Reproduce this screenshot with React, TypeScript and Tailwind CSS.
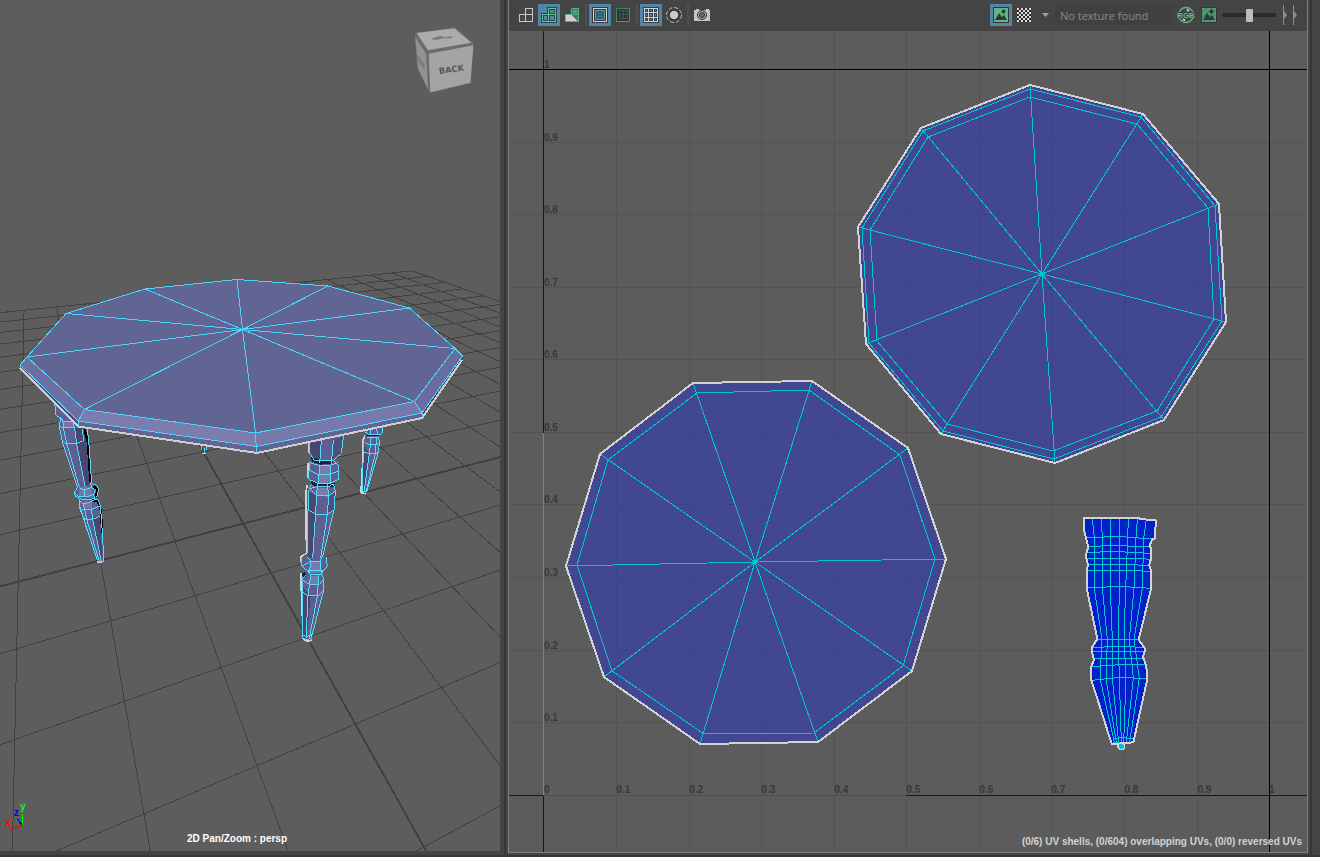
import type { ReactNode } from "react";

type Pt = [number, number];

/* ---------- perspective viewport ---------- */

const weight = (u: number, v: number) => 1 + 0.0436 * u - 0.114 * v;

const project = (u: number, v: number): Pt => {
  const w = weight(u, v);
  return [(75.83 * u - 3.17 * v + 243.3) / w, (5.95 * u - 15.7 * v + 523.5) / w];
};

const steps = Array.from({ length: 25 }, (_, i) => i - 12);

function GroundGrid() {
  const lines: { a: Pt; b: Pt; main: boolean }[] = [];
  steps.forEach((n) => {
    const uStart = Math.max(-12, (0.15 - 1 + 0.114 * n) / 0.0436);
    if (uStart < 12) lines.push({ a: project(uStart, n), b: project(12, n), main: n === 0 });
    const vEnd = Math.min(12, (1 + 0.0436 * n - 0.15) / 0.114);
    lines.push({ a: project(n, -12), b: project(n, vEnd), main: n === 0 });
  });
  return (
    <g stroke="#414141" fill="none">
      {lines.map((l, i) => (
        <line key={i} x1={l.a[0]} y1={l.a[1]} x2={l.b[0]} y2={l.b[1]} strokeWidth={l.main ? 2 : 1} />
      ))}
    </g>
  );
}

const tableInner: Pt[] = [
  [27, 357], [66, 313.5], [145, 289], [237, 279.5], [328, 286],
  [409.5, 308], [455, 348.5], [414.5, 401.5], [255.5, 433], [84.5, 409.5],
];

function FrontLeg() {
  return (
    <g transform="translate(280 420) scale(0.33333)" strokeWidth="3">
      <path fill="#5c5f90" stroke="none" d="M88 60L88 98L100 118L88 130L86 180L97 190L84 203L80 270L83 410L64 412L65 440L80 462L66 470L66 540L70 655L82 663L95 655L130 520L132 472L125 460L142 438L138 410L126 402L163 270L166 210L160 198L175 178L175 138L160 124L184 100L191 40Z" />
      <path fill="#464872" stroke="none" d="M88 60L124 60L119 120L92 102ZM86 215L112 228L108 280L82 268ZM82 268L108 282L98 415L84 410ZM66 500L92 528L80 655L70 655Z" />
      <path fill="#1e2038" stroke="none" d="M92 108L120 120L160 120L160 130L120 134L96 126ZM92 178L112 190L165 190L160 202L112 200L95 194ZM66 460L76 456L78 470L68 472Z" />
      <path fill="#787bac" stroke="none" d="M118 136L151 136L150 190L116 188ZM92 424L120 424L122 458L88 458ZM92 468L116 468L116 492L90 492ZM112 204L142 204L145 230L110 228Z" />
      <path fill="#4d4f7c" stroke="none" d="M157 60L190 50L184 100L157 118ZM145 230L166 214L163 270L142 283Z" />
      <g fill="none" stroke="#d2d2d4" strokeWidth="5">
        <path d="M87 68V98M84 128L84 175M82 195L78 215L78 315M78 315L80 400L62 410V425M64 460L63 512M66 512L68 655L82 664L96 660" />
      </g>
      <g fill="none" stroke="#53dcfc">
        <path d="M88 68V98L102 120L160 122L184 100L191 45" />
        <path d="M88 126L86 178M118 136L88 128M118 136H151L175 128M88 150L115 164H150L175 152M86 178L114 190H150L176 178L175 135L162 124M118 136L116 190M151 136L150 190" />
        <path d="M95 192L88 206L110 228H146L166 214L160 192M88 206L112 200H145L160 192M112 192L110 228L98 415M142 192L146 228L142 283L122 415M85 210L82 400M166 214L162 270L128 410M82 268L108 283H142L162 270" />
        <path d="M124 60L119 130M160 60L154 134" />
        <path d="M66 412V438L82 452H130L142 438L138 410M83 412L92 424H120L128 408M66 438L92 424L88 460M120 424L124 458M82 452L92 464H122L130 452" />
        <path d="M78 465L66 478L88 493H118L132 476L124 460M66 514L84 528H112L130 514M66 478L68 654L82 660L94 654L130 514L132 476M92 464L84 528L78 655M116 466L112 528L88 655M68 644L80 650L96 644" />
      </g>
    </g>
  );
}

function BackRightLeg() {
  return (
    <g transform="translate(280 420) scale(0.33333)" strokeWidth="3">
      <path fill="#5c5f90" stroke="none" d="M252 30L308 20L306 42L296 50L298 72L294 100L260 222H243L252 60L262 48L252 40Z" />
      <path fill="#464872" stroke="none" d="M250 70L266 100L252 215H246Z" />
      <path fill="none" stroke="#d2d2d4" strokeWidth="5" d="M255 46L249 60V110L243 218L258 222" />
      <path fill="none" stroke="#53dcfc" d="M252 34L268 44H300L308 36V22M272 28L270 44M290 24L292 44M262 52H296L298 70L288 75H268L254 66M252 60L252 96L268 101H290L296 96M298 70L294 100L260 216H246L250 100M274 50L268 101L252 216M290 50L286 101L258 216" />
      <path fill="none" stroke="#111428" d="M262 47H296" />
    </g>
  );
}

function LeftLeg() {
  return (
    <g transform="translate(40 400) scale(0.33333)" strokeWidth="3">
      <path fill="#5c5f90" stroke="none" d="M44 10L58 80L68 130L112 262L103 280L120 302L120 320L172 488H190L188 420L180 320L170 296L176 270L155 250L148 140L138 88L60 30Z" />
      <path fill="#464872" stroke="none" d="M104 84H134L150 250L136 262L118 180ZM158 352L178 348L188 470L180 470Z" />
      <path fill="#7477a8" stroke="none" d="M68 64H98L100 84H68ZM118 262L154 262L158 292H116ZM132 304L156 306L156 326L130 324Z" />
      <path fill="none" stroke="#000" strokeWidth="7" d="M134 88L144 130L151 245M156 300L174 304L182 330L187 400M160 258L172 268L168 290" />
      <g fill="none" stroke="#53dcfc">
        <path d="M44 10L48 45L62 55L58 80L68 130L112 262L103 278L106 288L120 300L118 320L130 355L172 480M48 45L70 60M58 80L72 84H106M60 50L68 64H96M98 64L104 84L110 132L136 262M70 84L80 130L118 262M78 132H108L130 122L128 88M68 64L72 84M68 124L80 132M142 88L146 120L155 250" />
        <path d="M120 264L134 270L154 262L152 250M104 278L116 290H142L160 284L166 270L154 262M134 270L132 290M155 250L170 256L176 270L170 290M116 290L128 300H150L164 294L160 284" />
        <path d="M120 304L130 312L150 306L172 296L180 314L184 352L192 484H172M130 312L134 328L126 330M134 328H154L180 318M128 350L138 358H158L180 348M134 328L140 358L178 484M154 328L158 358L184 484M120 320L130 350L140 390" />
      </g>
      <path fill="none" stroke="#d2d2d4" strokeWidth="4" d="M172 488H186" />
    </g>
  );
}

function TableMesh() {
  return (
    <g>
      <path d="M201.500 446V450M204.500 448V453M206.500 447V450" fill="none" stroke="#4fd8fb" strokeWidth="1" />
      <path d="M202 453.500H206" fill="none" stroke="#d2d2d4" />
      <BackRightLeg />
      <LeftLeg />
      <FrontLeg />
      <path d="M20 365L27 357L66 313L145 289L237 279.5L328 286L409.5 308L455 348.5L462.5 356L462 361L422 418L257 453L78 427L20 368Z" fill="#616594" />
      <path d="M84.5 409.5L255.5 433L256.5 446.5L78 421Z" fill="#7a7dae" />
      <path d="M255.5 433L414.5 401.5L422 413L256.5 446.5Z" fill="#7679aa" />
      <path d="M20 365L27 357L84.5 409.5L78 421Z" fill="#6c6fa1" />
      <path d="M414.5 401.5L455 348.5L462.5 356L422 413Z" fill="#696c9e" />
      <path d="M20 366L78 422V427L20 369ZM422 413L462 357V361L422 418Z" fill="#41436c" />
      <path d="M20 368L78.500 426.500L257 453L422 418L462 360" fill="none" stroke="#cfcfd3" strokeWidth="2" />
      <g stroke="#4bd5fc" strokeWidth="1" fill="none">
        <polygon points={tableInner.map((p) => p.join(",")).join(" ")} />
        {tableInner.map((p, i) => (
          <line key={i} x1="242.5" y1="329.5" x2={p[0]} y2={p[1]} />
        ))}
        <path d="M27 357L20 365L78 421L256.500 446.500L422 413L462.500 356L455 348.500M84.500 409.500L78 421V426M255.500 433L256.500 452M414.500 401.500L422 413V417M20 365V368" />
      </g>
    </g>
  );
}

function ViewCube() {
  return (
    <g transform="translate(400 15) scale(0.33333)">
      <path d="M43 54L165 37L222 85L213 205L90 235L52 163Z" fill="#6c6c6c" />
      <path d="M50 54L163 40L214 83L84 106Z" fill="#ababab" />
      <path d="M46 66L78 116L84 222L54 160Z" fill="#929292" />
      <path d="M86 116L220 91L211 203L91 232Z" fill="#a4a4a4" />
      <path d="M92 71L120 62L132 66L158 64L154 70L128 70L108 76Z" fill="#7c7c7c" />
      <path d="M50 116L74 150V166L52 132Z" fill="#7b7b7b" />
      <text x="154" y="172" fontSize="25" fontWeight="700" textAnchor="middle" fill="#55575f" fontFamily="DejaVu Sans, sans-serif" transform="rotate(-8 154 163)">
        BACK
      </text>
    </g>
  );
}

function PerspectiveView() {
  return (
    <section aria-label="Perspective view" className="relative mb-1 min-w-0 flex-[500] overflow-hidden bg-[#5d5d5d]">
      <svg className="absolute inset-0 h-full w-full" viewBox="0 0 500 851" preserveAspectRatio="xMidYMid slice">
        <g shapeRendering="crispEdges">
          <GroundGrid />
          <TableMesh />
        </g>
        <ViewCube />
        <g fill="none" shapeRendering="crispEdges">
          <path d="M10 828.500L16 827.500L22 825.500" stroke="#f00" />
          <path d="M17.500 819L22 825" stroke="#00c" />
          <path d="M22.500 814V825" stroke="#0f0" />
        </g>
        <g fontFamily="Liberation Sans, sans-serif" fontWeight="700" fontSize="10">
          <text x="5" y="826" fill="#f00">x</text>
          <text x="14" y="816" fill="#00c">z</text>
          <text x="20" y="810" fill="#2e2">y</text>
        </g>
      </svg>
      <p className="absolute bottom-[5px] left-[187px] font-['Liberation_Sans',sans-serif] text-[10px] leading-[14px] font-bold whitespace-nowrap text-white">
        2D Pan/Zoom : persp
      </p>
    </section>
  );
}

/* ---------- UV editor ---------- */

const gridX = [616.5, 689.5, 761.5, 834.5, 906.5, 979.5, 1051.5, 1124.5, 1197.5];
const gridY = [722.5, 650.5, 577.5, 504.5, 432.5, 359.5, 287.5, 214.5, 142.5];

type Shell = { center: Pt; outer: Pt[]; rings: Pt[][] };

const discTop: Shell = {
  center: [1042, 274],
  outer: [[1030, 85], [1143, 114], [1219, 204], [1226, 322], [1164, 420], [1055, 463], [941, 434], [866, 344], [858, 227], [921, 128]],
  rings: [
    [[1030, 89], [1141, 117], [1215, 206], [1222, 321], [1161, 417], [1054, 459], [943, 431], [869, 343], [862, 228], [923, 131]],
    [[1030, 97], [1137, 124], [1208, 208], [1214, 319], [1157, 411], [1053, 451], [947, 424], [877, 341], [870, 230], [928, 137]],
  ],
};

const discBottom: Shell = {
  center: [755, 562],
  outer: [[693, 383], [812, 381], [908, 448], [946, 559], [912, 671], [818, 742], [700, 744], [604, 677], [566, 566], [600, 454]],
  rings: [
    [[697, 393], [809, 390], [900, 455], [935, 559], [903, 666], [814, 733], [704, 734], [612, 671], [577, 565], [608, 460]],
  ],
};

const pts = (a: Pt[]) => a.map((p) => p.join(",")).join(" ");

function Disc({ shell }: { shell: Shell }) {
  const { center, outer, rings } = shell;
  return (
    <g fill="none" strokeWidth="1" stroke="#00c6d2">
      <polygon points={pts(outer)} fill="#2634c6" fillOpacity="0.5" stroke="none" />
      {rings.map((r, i) => (
        <polygon key={i} points={pts(r)} />
      ))}
      {outer.map((p, i) => (
        <line key={i} x1={center[0]} y1={center[1]} x2={p[0]} y2={p[1]} />
      ))}
      <polygon points={pts(outer)} stroke="#d3d3d3" strokeWidth="2" />
    </g>
  );
}

const legOutline =
  "M72 44L70 40L236 38L238 42L288 46L284 102L277 102L268 125L273 130L272 165L268 180L273 198L273 252L236 404L256 432L249 456L258 480L262 510L262 522L220 712L192 714L186 718L155 716L94 525L92 490L102 464L97 445L97 425L112 402L80 250L80 190L85 182L79 160L79 145L85 125L78 100L72 75Z";

function LegShell() {
  return (
    <g transform="translate(1060 505) scale(0.33333)" fill="none">
      <path d={legOutline} fill="#0020c8" />
      <g stroke="#00c8d4" strokeWidth="3">
        <path d="M78 99L170 94L277 102M85 125L160 121L268 126M79 143L160 139L210 142L272 145M79 160H230L272 163M85 179H200L268 181M80 197H220L272 199M80 249L180 244L273 250M112 403H236M97 428L170 424L252 427M97 439H256M102 461H249M92 485L180 479L258 479M96 526L180 517L262 521M158 702L180 698L220 700M158 712H220" />
        <path d="M97 42L103 100V250L126 404L120 520L163 712" />
        <path d="M124 42L127 100V250L142 404L138 520L169 712" />
        <path d="M151 42V250L157 404V520L176 712" />
        <path d="M178 42V250L175 404L178 520L184 712" />
        <path d="M205 42L203 100L197 250L192 404L198 520L191 712" />
        <path d="M232 42L228 100L222 250L208 404L220 520L199 712" />
        <path d="M259 42L251 100L247 250L222 404L238 520L209 712" />
      </g>
      <path d={legOutline} stroke="#d3d3d3" strokeWidth="6" strokeLinejoin="bevel" />
      <circle cx="184" cy="724" r="10" fill="#10b8d8" stroke="#d3d3d3" strokeWidth="5" />
    </g>
  );
}

function UvCanvas() {
  return (
    <div className="relative min-h-0 flex-1 overflow-hidden bg-[#5c5c5c]">
      <svg className="absolute inset-0 h-full w-full" viewBox="509 31 798 821" preserveAspectRatio="xMidYMid slice">
        <g shapeRendering="crispEdges" fill="none">
          <g stroke="#535353">
            {gridX.map((x) => <line key={x} x1={x} y1="31" x2={x} y2="852" />)}
            {gridY.map((y) => <line key={y} x1="509" y1={y} x2="1307" y2={y} />)}
          </g>
          <path d="M543.500 31V433M543.500 795V852M509 795.500H543M906 795.500H1307" stroke="#0000c8" />
          <path d="M543.500 433V795" stroke="#1fc41f" />
          <path d="M543 795.500H906" stroke="#dc1414" />
          <path d="M509 69.500H1307M1269.500 31V852" stroke="#000" />
        </g>
        <g fontFamily="Liberation Sans, sans-serif" fontWeight="700" fontSize="10" fill="#383838">
          <text x="544" y="793">0</text>
          {gridX.map((x, i) => <text key={x} x={x} y="793">{`0.${i + 1}`}</text>)}
          <text x="1269" y="793">1</text>
          {gridY.map((y, i) => <text key={y} x="544" y={y - 2}>{`0.${i + 1}`}</text>)}
          <text x="544" y="68">1</text>
        </g>
        <g shapeRendering="crispEdges">
          <Disc shell={discTop} />
          <Disc shell={discBottom} />
          <LegShell />
        </g>
      </svg>
      <p className="absolute right-[5px] bottom-[3px] font-['Liberation_Sans',sans-serif] text-[10px] leading-[14px] font-bold whitespace-nowrap text-[#d2d2d2]">
        (0/6) UV shells, (0/604) overlapping UVs, (0/0) reversed UVs
      </p>
    </div>
  );
}

/* ---------- toolbar ---------- */

function Tool({ label, active, children }: { label: string; active?: boolean; children: ReactNode }) {
  return (
    <button
      type="button"
      aria-label={label}
      aria-pressed={!!active}
      className={`flex size-[22px] shrink-0 items-center justify-center ${active ? "bg-[#5285a6]" : "bg-transparent"}`}
    >
      <svg width="18" height="18" viewBox="0 0 18 18" fill="none" shapeRendering="crispEdges">
        {children}
      </svg>
    </button>
  );
}

const Divider = () => <span className="mx-px h-[22px] w-[2px] shrink-0 bg-[#505050]" />;

const squares = "M8.500 2.500H15.500V8.500H8.500ZM2.500 8.500H8.500V15.500H2.500ZM8.500 8.500H15.500V15.500H8.500Z";

function PictureIcon({ muted }: { muted?: boolean }) {
  return (
    <>
      <rect x="1" y="1" width="16" height="16" fill="#353535" />
      <rect x="2" y="2" width="14" height="14" fill={muted ? "#4f9d78" : "#5fb58a"} />
      {muted && <path d="M2 7L7 2M2 12L12 2M4 15L15 4M9 15L15 9" stroke="#3d6f59" shapeRendering="auto" />}
      <path d="M3 14L7 7L10 11L12 9L15 14Z" fill="#303a35" shapeRendering="auto" />
      <circle cx="11.500" cy="5.500" r="2" fill="#303a35" shapeRendering="auto" />
    </>
  );
}

const cells = [0, 1, 2, 3, 4, 5, 6];

function Toolbar() {
  return (
    <div role="toolbar" aria-label="UV tools" className="flex h-[31px] shrink-0 items-center bg-[#444444] pr-[9px] pb-px pl-[6px]">
      <div className="flex shrink-0 items-center gap-px">
        <Tool label="Wireframe">
          <path d={squares} stroke="#c9c9c9" />
        </Tool>
        <Tool label="Shaded" active>
          <rect x="7" y="1" width="10" height="8" fill="#2d4a4a" />
          <rect x="1" y="7" width="16" height="10" fill="#2d4a4a" />
          <path d="M10 4H14V7H10ZM4 10H7V14H4ZM10 10H14V14H10Z" fill="#5285a6" />
          <path d={squares} stroke="#5fc08e" />
        </Tool>
        <Tool label="Distortion">
          <path d="M8 2H16V16H2V8H8Z" fill="#3f7d61" />
          <path d="M10 4H14V7H10Z" fill="#56a47e" />
          <path d="M3 9H8L15 15H3Z" fill="#cfcfcf" />
          <path d="M8.500 2.500H15.500V15.500H2.500V8.500H15M8.500 2.500V8.500" stroke="#56b285" />
        </Tool>
        <Divider />
        <Tool label="Texture borders" active>
          <rect x="1" y="1" width="16" height="16" fill="#353b40" />
          <rect x="2.500" y="2.500" width="13" height="13" stroke="#d0d0d0" />
          <rect x="5" y="5" width="8" height="8" fill="#35507c" />
          <path d="M7.500 5V13M10.500 5V13M5 7.500H13M5 10.500H13" stroke="#3d7280" />
          <path d="M4.500 4.500H13.500V13.500H4.500Z" stroke="#4da27b" />
        </Tool>
        <Tool label="Shell borders">
          <rect x="2" y="2" width="13" height="13" fill="#303432" />
          <path d="M2.500 2.500H15.500V15.500H2.500Z" stroke="#488065" />
          <path d="M15.500 2V16M2 15.500H16" stroke="#6f7f77" />
          <path d="M5.500 4V13M9.500 4V13M13.500 4V13M5 4.500H13M5 8.500H13M5 12.500H13" stroke="#3a5a4b" />
        </Tool>
        <Divider />
        <Tool label="Grid" active>
          <rect x="1" y="1" width="16" height="16" fill="#36404a" />
          <path d="M2.500 2.500H15.500V15.500H2.500ZM6.500 2V16M11.500 2V16M2 6.500H16M2 11.500H16" stroke="#d4d4d4" />
          <path d="M4 4h1v1h-1zM4 8h1v2h-1zM4 13h1v1h-1zM8 4h2v1h-2zM8 8h2v2h-2zM8 13h2v1h-2zM13 4h1v1h-1zM13 8h1v2h-1zM13 13h1v1h-1z" fill="#5285a6" />
        </Tool>
        <Tool label="Isolate select">
          <g shapeRendering="auto">
            <circle cx="9" cy="9" r="7.500" stroke="#bdbdbd" strokeDasharray="3.900 2" />
            <circle cx="9" cy="9" r="5.500" fill="#303030" />
            <circle cx="9" cy="9" r="4.300" fill="#cacaca" />
          </g>
        </Tool>
        <Divider />
        <Tool label="UV snapshot">
          <path d="M1 4H3V3H6V4H13V3H16V4H17V15H1Z" fill="#c4c4c4" />
          <g shapeRendering="auto">
            <circle cx="9" cy="9" r="4.500" fill="#aaa" stroke="#2f2f2f" />
            <circle cx="9" cy="9" r="2.500" fill="#6b6b6b" stroke="#333" />
          </g>
        </Tool>
      </div>

      <div className="ml-auto flex shrink-0 items-center">
        <Tool label="Display image" active>
          <PictureIcon />
        </Tool>
        <div className="ml-px">
          <Tool label="Checker map">
            <rect x="2" y="2" width="14" height="14" fill="#2c2c2c" />
            {cells.map((r) => cells.map((c) => (r + c) % 2 === 0 && <rect key={`${r}-${c}`} x={2 + c * 2} y={2 + r * 2} width="2" height="2" fill="#d8d8d8" />))}
          </Tool>
        </div>
        <button type="button" aria-label="Checker options" className="flex h-[22px] w-[20px] items-center justify-center">
          <svg width="7" height="4" viewBox="0 0 7 4"><path d="M0 0H7L3.500 4Z" fill="#a0a0a0" /></svg>
        </button>
        <input
          aria-label="Texture"
          readOnly
          value="No texture found"
          className="h-[20px] w-[118px] rounded-[2px] bg-[#404040] px-[5px] font-['Open_Sans',sans-serif] text-[11px] text-[#8a8a8a] outline-none"
        />
        <button type="button" aria-label="RGB channels" className="ml-[2px] flex h-[22px] w-[22px] items-center justify-center">
          <svg width="20" height="18" viewBox="0 0 20 18" fill="none">
            <circle cx="10" cy="9" r="7.500" stroke="#5fb58a" strokeWidth="1.300" />
            <path d="M11 3.500L13 5M9 14.500L7 13" stroke="#d0d0d0" strokeWidth="2" />
            <rect x="1" y="6" width="18" height="6" fill="#3c4642" />
            <text x="10" y="12" textAnchor="middle" fontFamily="Liberation Sans, sans-serif" fontWeight="700" fontSize="8" fill="#62bb8f">RGB</text>
          </svg>
        </button>
        <div className="ml-px">
          <Tool label="Dim image">
            <PictureIcon muted />
          </Tool>
        </div>
        <input
          type="range"
          aria-label="Image brightness"
          min={0}
          max={100}
          defaultValue={50}
          className="ml-[2px] h-[22px] w-[54px] appearance-none bg-transparent [&::-webkit-slider-runnable-track]:h-[4px] [&::-webkit-slider-runnable-track]:rounded-full [&::-webkit-slider-runnable-track]:bg-[#2a2a2a] [&::-webkit-slider-thumb]:-mt-[4px] [&::-webkit-slider-thumb]:h-[13px] [&::-webkit-slider-thumb]:w-[7px] [&::-webkit-slider-thumb]:appearance-none [&::-webkit-slider-thumb]:rounded-[1px] [&::-webkit-slider-thumb]:bg-[#bcbcbc]"
        />
        <button type="button" aria-label="More tools" className="ml-[7px] flex h-[22px] items-center">
          <svg width="15" height="20" viewBox="0 0 15 20">
            <path d="M0 0H1V6L4 10L1 14V20H0ZM10 0H11V6L14 10L11 14V20H10Z" fill="#8c8c8c" />
          </svg>
        </button>
      </div>
    </div>
  );
}

export default function App() {
  return (
    <div className="flex h-screen flex-col overflow-hidden bg-[#444444]">
      <main className="flex min-h-0 flex-1">
        <PerspectiveView />
        <div className="flex w-2 shrink-0 justify-center">
          <div className="ml-[2px] w-[2px] bg-[#373737]" />
        </div>
        <section aria-label="UV editor" className="mb-[2px] flex min-w-0 flex-[798] flex-col border-x border-b border-[#808080]">
          <Toolbar />
          <UvCanvas />
        </section>
        <div className="flex w-3 shrink-0 pl-[2px]">
          <div className="w-[2px] bg-[#373737]" />
        </div>
      </main>
      <div className="h-[2px] shrink-0 bg-[#373737]" />
    </div>
  );
}
